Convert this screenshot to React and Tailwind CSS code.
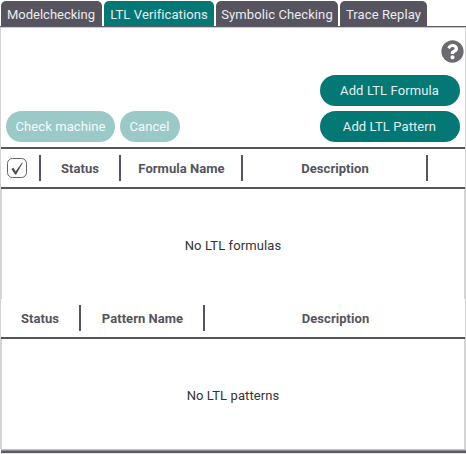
import { FaQuestionCircle } from "react-icons/fa";

function Tab({ active, className, children }) {
  return (
    <div
      className={`flex h-[25px] items-center justify-center rounded-t-[5px] pt-[2px] whitespace-nowrap text-[#ececee] ${
        active ? "bg-[#037875]" : "bg-[#55545f]"
      } ${className}`}
    >
      {children}
    </div>
  );
}

function Button({ disabled, className, children }) {
  return (
    <button
      className={`flex h-[31px] items-center justify-center rounded-full whitespace-nowrap ${
        disabled ? "bg-[#9ac9c8] text-[#f7fbfb]" : "bg-[#037875] text-[#e4f0f0]"
      } ${className}`}
    >
      {children}
    </button>
  );
}

function HeaderCell({ last, className, children }) {
  return (
    <div className={`flex h-[26px] items-center justify-center border-[#55545f] ${last ? "" : "border-r-2"} ${className}`}>
      {children}
    </div>
  );
}

function Body({ className, children }) {
  return (
    <div className={`flex items-center justify-center border-x border-[#d4d4d4] pt-[3px] text-[#333333] ${className}`}>
      {children}
    </div>
  );
}

export default function App() {
  return (
    <div className="flex h-[454px] w-[466px] flex-col overflow-hidden bg-white font-['Roboto','Liberation_Sans',sans-serif] text-[13px] leading-[16px] tracking-[0.1px]">
      <div className="flex gap-[2px] pt-px pl-px">
        <Tab className="w-[101px] pr-px tracking-[0px]">Modelchecking</Tab>
        <Tab active className="w-[110px]">LTL Verifications</Tab>
        <Tab className="w-[122px]">Symbolic Checking</Tab>
        <Tab className="w-[87px]">Trace Replay</Tab>
      </div>
      <div className="h-px bg-[#5b5a66]" />
      <div className="h-px bg-[#c9c9cf]" />
      <div className="flex h-[421px] flex-col border-x border-[#d4d4d4]">
        <div className="flex h-[119px] flex-col pt-[12px] pr-[5px] pl-[5px]">
          <div className="-mr-[4px] flex justify-end">
            <FaQuestionCircle className="size-[23px] text-[#6b6a73]" />
          </div>
          <div className="mt-[12px] flex justify-end">
            <Button className="w-[140px] pr-px">Add LTL Formula</Button>
          </div>
          <div className="mt-[5px] flex gap-[5px]">
            <Button disabled className="w-[109px]">Check machine</Button>
            <Button disabled className="w-[60px] pr-px">Cancel</Button>
            <Button className="ml-auto w-[140px] pr-px">Add LTL Pattern</Button>
          </div>
        </div>
        <div className="flex h-[42px] items-center border-y-2 border-[#55545f] font-bold tracking-[0.05px] text-[#55545f]">
          <HeaderCell className="w-[40px] pr-[6px]">
            <svg width="20" height="20" viewBox="0 0 20 20" fill="none">
              <rect x="0.5" y="0.5" width="19" height="19" rx="5" stroke="#62616c" strokeWidth="1" />
              <path d="M4.4 10.9 L6.4 9.8 L8.6 13.6 L15.1 4.4 L15.8 4.8 L9.2 16.6 L8 16.6 Z" fill="#4b4a55" />
            </svg>
          </HeaderCell>
          <HeaderCell className="w-[80px] pt-[2px]">Status</HeaderCell>
          <HeaderCell className="w-[122px] pt-[2px] pl-px">Formula Name</HeaderCell>
          <HeaderCell className="w-[185px] pt-[2px] pl-px">Description</HeaderCell>
        </div>
        <Body className="h-[110px]">No LTL formulas</Body>
        <div className="flex h-[40px] items-center border-b-2 border-[#55545f] font-bold tracking-[0.05px] text-[#55545f]">
          <HeaderCell className="w-[80px] pt-[2px]">Status</HeaderCell>
          <HeaderCell className="w-[124px] pt-[2px] pl-px">Pattern Name</HeaderCell>
          <HeaderCell last className="flex-1 pt-[2px] pl-px">Description</HeaderCell>
        </div>
        <Body className="h-[110px]">No LTL patterns</Body>
      </div>
      <div className="ml-px h-px shrink-0 bg-[#c4c4c6]" />
      <div className="ml-px h-px shrink-0 bg-[#8d8c94]" />
      <div className="ml-px h-[2px] shrink-0 bg-[#5b5a65]" />
      <div className="ml-px h-px shrink-0 bg-[#e2e2e4]" />
    </div>
  );
}
